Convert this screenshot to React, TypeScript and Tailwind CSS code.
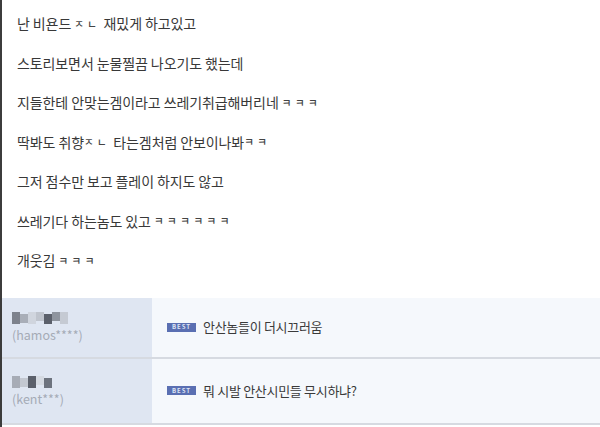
const font = {
  fontFamily: '"Noto Sans CJK KR", "Noto Sans", sans-serif',
};

type Part = { t: string; k?: boolean };

const lines: Part[][] = [
  [{ t: "난 비욘드 " }, { t: "ㅈㄴ", k: true }, { t: " 재밌게 하고있고" }],
  [{ t: "스토리보면서 눈물찔끔 나오기도 했는데" }],
  [{ t: "지들한테 안맞는겜이라고 쓰레기취급해버리네 " }, { t: "ㅋㅋㅋ", k: true }],
  [{ t: "딱봐도 취향" }, { t: "ㅈㄴ", k: true }, { t: " 타는겜처럼 안보이나봐" }, { t: "ㅋㅋ", k: true }],
  [{ t: "그저 점수만 보고 플레이 하지도 않고" }],
  [{ t: "쓰레기다 하는놈도 있고 " }, { t: "ㅋㅋㅋㅋㅋㅋ", k: true }],
  [{ t: "개웃김 " }, { t: "ㅋㅋㅋ", k: true }],
];

const Mosaic = ({ cells }: { cells: string[] }) => (
  <svg width={cells.length * 8} height="12" className="block">
    {cells.map((c, i) => (
      <rect key={i} x={i * 8} y={i % 3 === 1 ? 2 : 0} width="8" height={i % 2 ? 9 : 12} fill={c} />
    ))}
  </svg>
);

const Best = () => (
  <span className="inline-flex h-[9px] w-[29px] items-center justify-center bg-[#5a6fb2] text-[6px] font-bold leading-none tracking-[1px] text-[#dfe5f5]">
    BEST
  </span>
);

const comments = [
  {
    cells: ["#7d828c", "#a9aeb8", "#d0d5de", "#bfc4cd", "#5b606b", "#8e949e", "#c5cad3"],
    id: "(hamos****)",
    text: "안산놈들이 더시끄러움",
    h: "h-[61px]",
  },
  {
    cells: ["#a7acb6", "#c3c8d1", "#5b606b", "#d5dae2", "#6d737e"],
    id: "(kent***)",
    text: "뭐 시발 안산시민들 무시하냐?",
    h: "h-[66px]",
  },
];

export default function App() {
  return (
    <div className="h-[427px] w-[600px] overflow-hidden border-l-2 border-[#3c3c3c] bg-white text-[#383838]" style={font}>
      <div className="flex flex-col pl-[15px] pt-[4px]">
        {lines.map((parts, i) => (
          <div key={i} className="flex h-[39.5px] items-center text-[14px] tracking-[-0.1px]">
            {parts.map((p, j) =>
              p.k ? (
                <span key={j} className="text-[10.5px] font-medium tracking-[3.5px] text-[#444]">
                  {p.t}
                </span>
              ) : (
                <span key={j} className="whitespace-pre">{p.t}</span>
              )
            )}
          </div>
        ))}
      </div>
      <div className="mt-[17px] flex flex-col">
        {comments.map((c, i) => (
          <div key={i} className={`flex ${c.h} border-b-2 border-[#d6dae1]`}>
            <div className="flex w-[150px] flex-col justify-center bg-[#dfe6f2] pl-[10px]">
              <Mosaic cells={c.cells} />
              <span className="mt-[5px] text-[12.5px] leading-none text-[#a5abb6]">{c.id}</span>
            </div>
            <div className="flex flex-1 items-center gap-[7px] bg-[#f5f8fc] pl-[15px]">
              <Best />
              <span className="text-[13px] tracking-[-0.3px] text-[#3a3a3a]">{c.text}</span>
            </div>
          </div>
        ))}
      </div>
    </div>
  );
}
